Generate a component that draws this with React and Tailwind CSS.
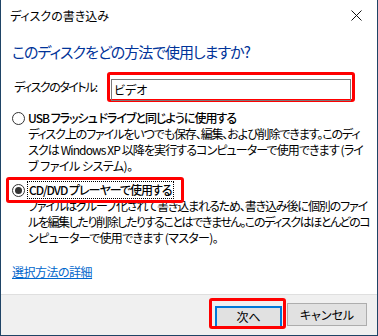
import { useState } from 'react';

const Radio = ({ checked }) => (
  <span className="w-[13px] h-[13px] rounded-full border border-[#333333] bg-white flex items-center justify-center shrink-0">
    {checked && <span className="w-[7px] h-[7px] rounded-full bg-[#333333]" />}
  </span>
);

const CloseIcon = () => (
  <svg width="11" height="11" viewBox="0 0 11 11" className="block">
    <path d="M0.5 0.5 L10.5 10.5 M10.5 0.5 L0.5 10.5" stroke="#111" strokeWidth="1" fill="none" />
  </svg>
);

const Option = ({ checked, label, lines, highlight }) => (
  <div className="mt-[8px]">
    <div className="relative flex items-center h-[16px]">
      <Radio checked={checked} />
      {highlight ? (
        <span className="ml-[2px] px-[1px] h-[18px] leading-[16px] border border-dotted border-black text-[12px] font-medium tracking-[-1px] whitespace-nowrap">
          {label}
        </span>
      ) : (
        <span className="ml-[3px] text-[12px] leading-[16px] font-medium tracking-[-1px] whitespace-nowrap">{label}</span>
      )}
      {highlight && (
        <div className="absolute left-[-6px] top-[-5px] w-[178px] h-[26px] border-[3px] border-[#ff0000] rounded-[3px] z-10 pointer-events-none" />
      )}
    </div>
    <div className="pl-[16px] text-[12px] leading-[16px] whitespace-nowrap">
      {lines.map(([text, cls], i) => <div key={i} className={cls}>{text}</div>)}
    </div>
  </div>
);

export default function App() {
  const [title, setTitle] = useState('ビデオ');

  return (
    <div className="w-[378px] h-[336px] overflow-hidden bg-white border-x border-b border-[#1f4466] flex flex-col text-black font-['Noto_Sans_CJK_JP',sans-serif] [font-feature-settings:'palt']">
      {/* title bar */}
      <div className="h-[31px] flex items-center justify-between pl-[9px] pr-[15px] text-[12px]">
        <span>ディスクの書き込み</span>
        <CloseIcon />
      </div>

      {/* body */}
      <div className="flex-1 px-[11px]">
        <h1 className="mt-[11px] h-[20px] leading-[20px] text-[15px] tracking-[-1px] text-[#003399] whitespace-nowrap">
          このディスクをどの方法で使用しますか?
        </h1>

        <div className="mt-[10px] flex items-center h-[30px]">
          <label className="ml-[2px] w-[93px] text-[12px] tracking-[-1.5px] whitespace-nowrap">ディスクのタイトル:</label>
          <div className="w-[248px] h-[30px] border-[3px] border-[#ff0000] rounded-[3px] p-[1px]">
            <input
              value={title}
              onChange={(e) => setTitle(e.target.value)}
              className="w-full h-full border border-[#7a7a7a] pl-[2px] text-[12px] outline-none"
            />
          </div>
        </div>

        <Option
          label="USB フラッシュ ドライブと同じように使用する"
          lines={[
            ['ディスク上のファイルをいつでも保存、編集、および削除できます。このディ', 'tracking-[-1.1px]'],
            ['スクは Windows XP 以降を実行するコンピューターで使用できます (ライ', 'tracking-[-0.9px]'],
            ['ブ ファイル システム)。', 'tracking-[-0.5px]'],
          ]}
        />
        <Option
          checked
          highlight
          label="CD/DVD プレーヤーで使用する"
          lines={[
            ['ファイルはグループ化されて書き込まれるため、書き込み後に個別のファイ', 'tracking-[-1.1px]'],
            ['ルを編集したり削除したりすることはできません。このディスクはほとんどのコ', 'tracking-[-1.4px]'],
            ['ンピューターで使用できます (マスター)。', 'tracking-[-0.7px]'],
          ]}
        />

        <a href="#" className="block mt-[18px] text-[12px] leading-[16px] tracking-[-0.5px] text-[#0066cc] underline w-fit">
          選択方法の詳細
        </a>
      </div>

      {/* footer */}
      <div className="h-[41px] border-t border-[#dfdfdf] bg-[#f0f0f0] flex items-start justify-end pt-[8px] pr-[10px] gap-[5px]">
        <div className="relative">
          <button className="w-[67px] h-[23px] border-2 border-[#0078d7] bg-[#e1e1e1] text-[12px] leading-none">
            次へ
          </button>
          <div className="absolute left-[-6px] top-[-5px] w-[77px] h-[31px] border-[3px] border-[#ff0000] rounded-[3px] pointer-events-none" />
        </div>
        <button className="w-[80px] h-[23px] border border-[#adadad] bg-[#e1e1e1] text-[12px] leading-none">
          キャンセル
        </button>
      </div>
    </div>
  );
}
